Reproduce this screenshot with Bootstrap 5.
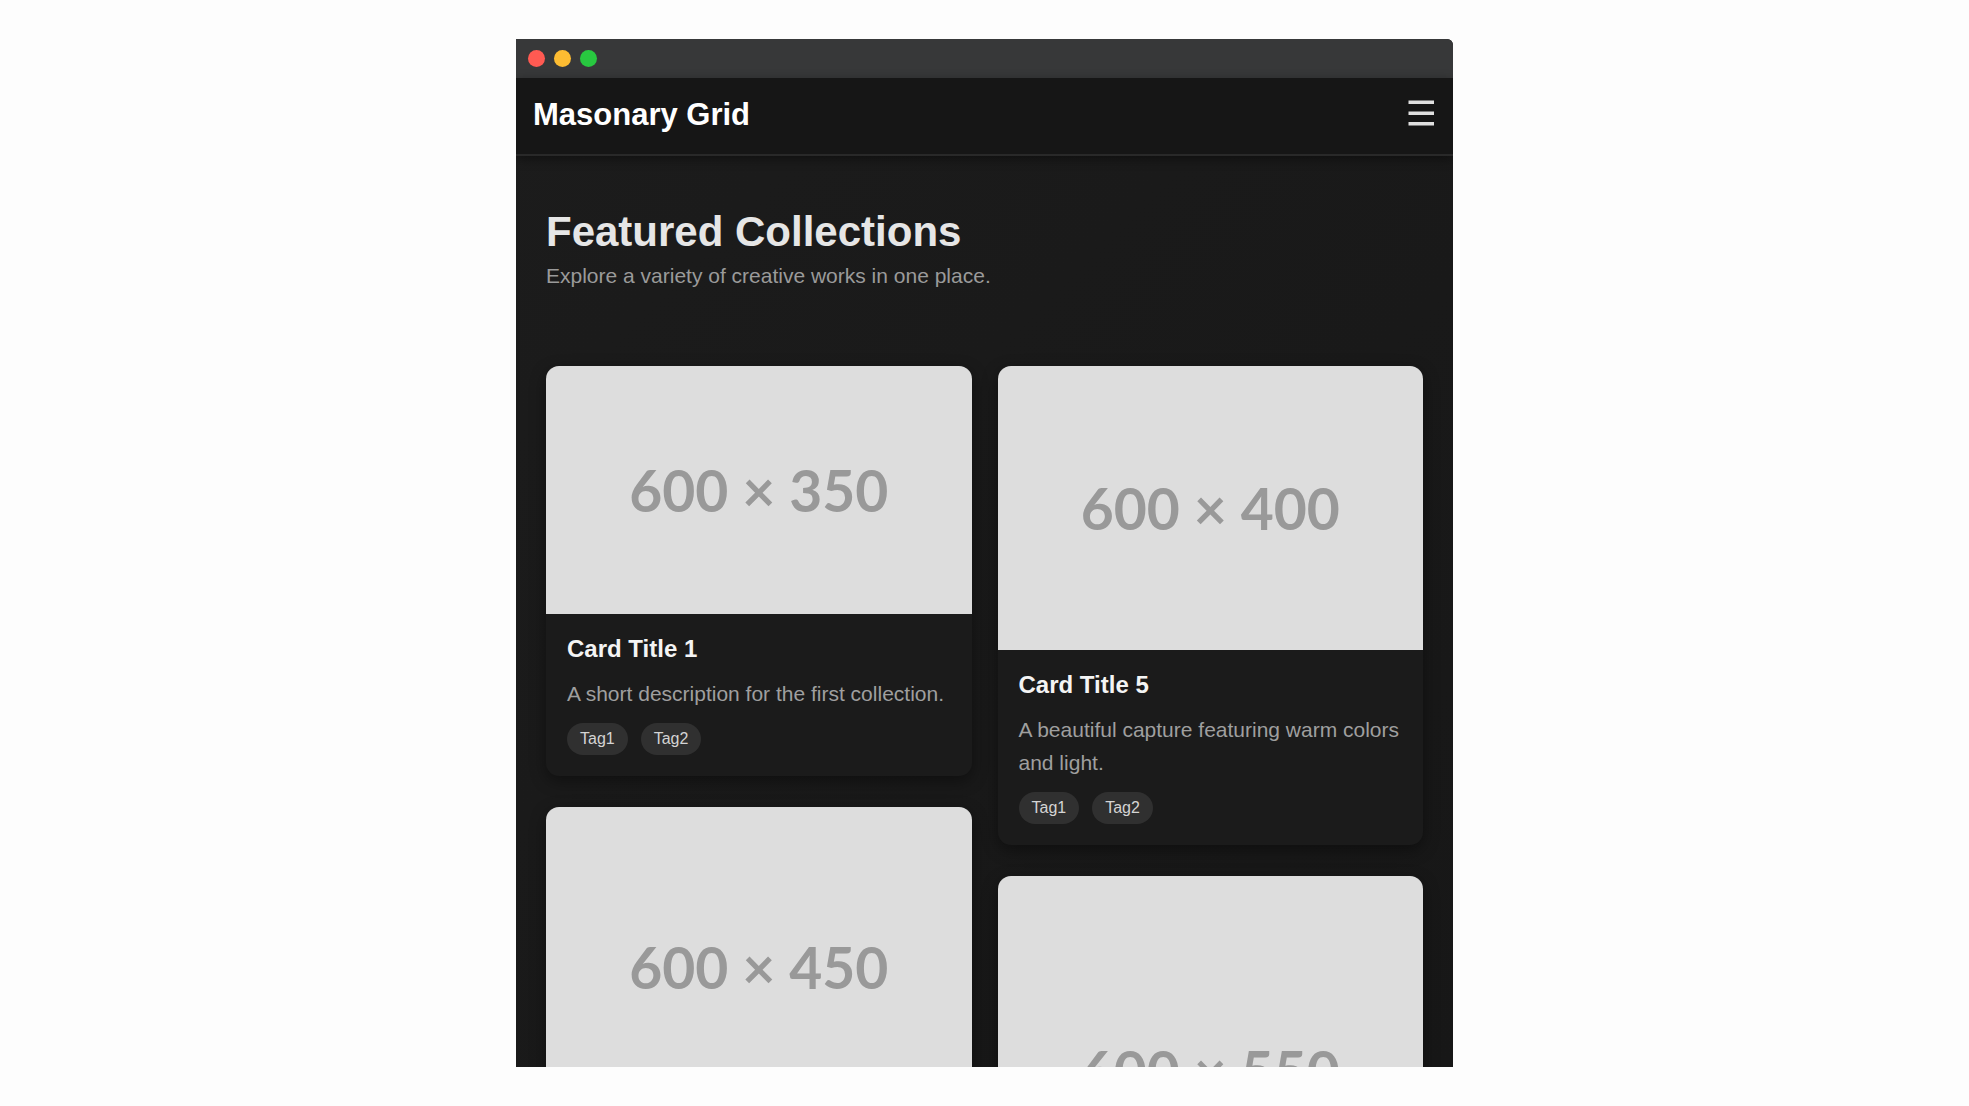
<!DOCTYPE html>
<html lang="en" data-bs-theme="dark">
<head>
<meta charset="utf-8">
<meta name="viewport" content="width=device-width, initial-scale=1">
<title>Masonary Grid</title>
<link href="https://cdn.jsdelivr.net/npm/bootstrap@5.3.0/dist/css/bootstrap.min.css" rel="stylesheet">
<style>
  body { background: #fdfdfd; font-family: "Liberation Sans", Arial, sans-serif; font-size: 21px; line-height: 33px; padding: 39px 12px; }
  .browser { max-width: 937px; height: calc(100vh - 78px); background: linear-gradient(135deg, #1c1c1c, #171717); border-top-right-radius: 6px; }
  .titlebar { background: #373839; height: 39px; padding: 0 12px; gap: 9px; }
  .dot { width: 17px; height: 17px; }
  .dot-close { background: #ff5a52; }
  .dot-min { background: #fdbc32; }
  .dot-max { background: #28c840; }
  .site-header { background: #161616; border-bottom: 2px solid #292929; box-shadow: 0 3px 10px rgba(0, 0, 0, .4); padding: 19px 18px 21px 17px; }
  .site-name { font-size: 31px; line-height: 36px; color: #fff; }
  .menu-btn { color: #e0e0e0; line-height: 1; }
  .content { padding: 51px 30px 0; }
  .hero { margin-bottom: 74px; }
  .hero h1 { font-size: 42px; line-height: 50px; color: #e6e6e6; margin-bottom: 2px; }
  .hero p { color: #9a9a9a; }
  .masonry, .masonry-col { --bs-gutter-x: 26px; }
  .masonry-col { gap: 31px; }
  .tile { background: #1b1b1b; border: 0; border-radius: 13px; box-shadow: 0 5px 16px rgba(0, 0, 0, .4); }
  .ph { background: #ddd; color: #999; font: 700 57px Lato, sans-serif; }
  .ph-350 { aspect-ratio: 600 / 350; }
  .ph-400 { aspect-ratio: 600 / 400; }
  .ph-450 { aspect-ratio: 600 / 450; }
  .ph-550 { aspect-ratio: 600 / 550; }
  .tile .card-body { padding: 21px; }
  .tile h2 { font-size: 24px; line-height: 28px; color: #f4f4f4; margin-bottom: 14px; }
  .tile p { color: #9f9f9f; margin-bottom: 13px; }
  .tags { gap: 13px; }
  .tag { background: #303030; color: #d4d4d4; font-size: 16px; line-height: 20px; padding: 6px 13px; }
</style>
</head>
<body>
<div class="browser mx-auto d-flex flex-column overflow-hidden">
  <div class="titlebar d-flex align-items-center flex-shrink-0">
    <span class="dot dot-close rounded-circle"></span>
    <span class="dot dot-min rounded-circle"></span>
    <span class="dot dot-max rounded-circle"></span>
  </div>
  <header class="site-header d-flex justify-content-between align-items-center flex-shrink-0">
    <a href="#" class="site-name fw-bold text-decoration-none">Masonary Grid</a>
    <button type="button" class="menu-btn btn p-0 border-0" aria-label="Menu">
      <svg class="d-block" width="28" height="32" viewBox="0 0 28 32" fill="currentColor" aria-hidden="true"><path d="M1.500 1.500h25.500v3.500H1.500zM1.500 12.500h25.500v3.500H1.500zM1.500 23h25.500v3.500H1.500z"/></svg>
    </button>
  </header>
  <main class="content">
    <div class="hero">
      <h1 class="fw-bold">Featured Collections</h1>
      <p class="mb-0">Explore a variety of creative works in one place.</p>
    </div>
    <div class="masonry row">
      <div class="masonry-col col-6 d-flex flex-column">
        <article class="tile card overflow-hidden">
          <div class="ph ph-350 d-flex align-items-center justify-content-center">600 × 350</div>
          <div class="card-body">
            <h2 class="fw-bold">Card Title 1</h2>
            <p>A short description for the first collection.</p>
            <div class="tags d-flex"><span class="tag rounded-pill">Tag1</span><span class="tag rounded-pill">Tag2</span></div>
          </div>
        </article>
        <article class="tile card overflow-hidden">
          <div class="ph ph-450 d-flex align-items-center justify-content-center">600 × 450</div>
        </article>
      </div>
      <div class="masonry-col col-6 d-flex flex-column">
        <article class="tile card overflow-hidden">
          <div class="ph ph-400 d-flex align-items-center justify-content-center">600 × 400</div>
          <div class="card-body">
            <h2 class="fw-bold">Card Title 5</h2>
            <p>A beautiful capture featuring warm colors and light.</p>
            <div class="tags d-flex"><span class="tag rounded-pill">Tag1</span><span class="tag rounded-pill">Tag2</span></div>
          </div>
        </article>
        <article class="tile card overflow-hidden">
          <div class="ph ph-550 d-flex align-items-center justify-content-center">600 × 550</div>
        </article>
      </div>
    </div>
  </main>
</div>
<script src="https://cdn.jsdelivr.net/npm/bootstrap@5.3.0/dist/js/bootstrap.bundle.min.js"></script>
</body>
</html>
